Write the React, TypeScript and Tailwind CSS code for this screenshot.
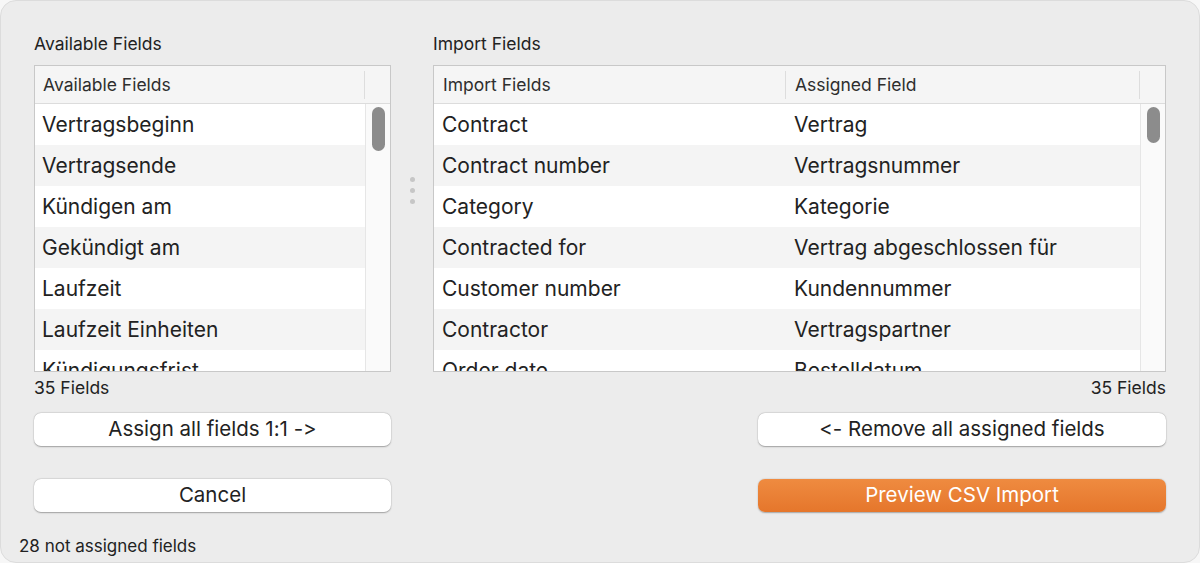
import React from 'react';

const available = [
  'Vertragsbeginn',
  'Vertragsende',
  'Kündigen am',
  'Gekündigt am',
  'Laufzeit',
  'Laufzeit Einheiten',
  'Kündigungsfrist',
];

const mappings: [string, string][] = [
  ['Contract', 'Vertrag'],
  ['Contract number', 'Vertragsnummer'],
  ['Category', 'Kategorie'],
  ['Contracted for', 'Vertrag abgeschlossen für'],
  ['Customer number', 'Kundennummer'],
  ['Contractor', 'Vertragspartner'],
  ['Order date', 'Bestelldatum'],
];

const font = { fontFamily: 'Inter, "Liberation Sans", sans-serif' };

const ScrollTrack = ({ thumb }: { thumb: string }) => (
  <div className="w-[25px] shrink-0 bg-[#fafafa] border-l border-[#e6e6e6] pt-[3px] flex justify-center">
    <div className={`w-[13px] rounded-full bg-[#8c8c8c] ${thumb}`} />
  </div>
);

const Button = ({ children, primary }: { children: React.ReactNode; primary?: boolean }) => (
  <button
    className={
      primary
        ? 'h-[33px] w-full rounded-[7px] bg-gradient-to-b from-[#ef8b40] to-[#e5762b] text-white text-[20.5px] shadow-[0_0.5px_1.5px_rgba(0,0,0,0.3)]'
        : 'h-[33px] w-full rounded-[7px] bg-white text-[#222] text-[20.5px] shadow-[0_0.5px_1.5px_rgba(0,0,0,0.3),0_0_0_0.5px_rgba(0,0,0,0.06)]'
    }
  >
    {children}
  </button>
);

const App: React.FC = () => {
  return (
    <div
      className="w-[1200px] h-[563px] bg-[#f7f7f7] overflow-hidden [font-feature-settings:'calt'_0] [font-variant-ligatures:none]"
      style={font}
    >
      <div className="w-full h-full rounded-[16px] bg-[#ececec] border border-[#dcdcdc] text-[#222] flex flex-col">
        <div className="flex pt-[32px] pl-[33px] pr-[33px]">
          {/* left: available fields */}
          <div className="w-[357px] flex flex-col">
            <div className="h-[22px] leading-[22px] text-[17.5px] mb-[10px]">Available Fields</div>
            <div className="h-[307px] border border-[#c8c8c8] bg-white flex flex-col overflow-hidden">
              <div className="h-[38px] shrink-0 flex items-center bg-[#f5f5f5] border-b border-[#dcdcdc]">
                <div className="flex-1 pl-[8px] text-[17.5px] text-[#2e2e2e] border-r border-[#dddddd] h-[28px] leading-[28px]">
                  Available Fields
                </div>
                <div className="w-[25px]" />
              </div>
              <div className="flex flex-1 min-h-0">
                <div className="flex-1 overflow-hidden">
                  {available.map((name, i) => (
                    <div
                      key={name}
                      className={`h-[41px] leading-[41px] pl-[7px] text-[21px] ${i % 2 ? 'bg-[#f4f4f4]' : 'bg-white'}`}
                    >
                      {name}
                    </div>
                  ))}
                </div>
                <ScrollTrack thumb="h-[44px]" />
              </div>
            </div>
            <div className="mt-[6px] h-[20px] leading-[20px] text-[17.5px]">35 Fields</div>
            <div className="mt-[15px]">
              <Button>Assign all fields 1:1 -&gt;</Button>
            </div>
            <div className="mt-[33px]">
              <Button>Cancel</Button>
            </div>
          </div>

          {/* splitter */}
          <div className="w-[42px] flex flex-col items-center pt-[144px] gap-[6px]">
            <div className="w-[5px] h-[5px] rounded-full bg-[#c6c6c6]" />
            <div className="w-[5px] h-[5px] rounded-full bg-[#c6c6c6]" />
            <div className="w-[5px] h-[5px] rounded-full bg-[#c6c6c6]" />
          </div>

          {/* right: import fields */}
          <div className="flex-1 flex flex-col">
            <div className="h-[22px] leading-[22px] text-[17.5px] mb-[10px]">Import Fields</div>
            <div className="h-[307px] border border-[#c8c8c8] bg-white flex flex-col overflow-hidden">
              <div className="h-[38px] shrink-0 flex items-center bg-[#f5f5f5] border-b border-[#dcdcdc]">
                <div className="w-[352px] pl-[9px] text-[17.5px] text-[#2e2e2e] border-r border-[#dddddd] h-[28px] leading-[28px]">
                  Import Fields
                </div>
                <div className="flex-1 pl-[9px] text-[17.5px] text-[#2e2e2e] border-r border-[#dddddd] h-[28px] leading-[28px]">
                  Assigned Field
                </div>
                <div className="w-[25px]" />
              </div>
              <div className="flex flex-1 min-h-0">
                <div className="flex-1 overflow-hidden">
                  {mappings.map(([src, dst], i) => (
                    <div
                      key={src}
                      className={`h-[41px] leading-[41px] flex text-[21px] ${i % 2 ? 'bg-[#f4f4f4]' : 'bg-white'}`}
                    >
                      <div className="w-[352px] pl-[8px]">{src}</div>
                      <div className="flex-1 pl-[8px]">{dst}</div>
                    </div>
                  ))}
                </div>
                <ScrollTrack thumb="h-[36px]" />
              </div>
            </div>
            <div className="mt-[6px] h-[20px] leading-[20px] text-[17.5px] text-right">35 Fields</div>
            <div className="mt-[15px] pl-[325px]">
              <Button>&lt;- Remove all assigned fields</Button>
            </div>
            <div className="mt-[33px] pl-[325px]">
              <Button primary>Preview CSV Import</Button>
            </div>
          </div>
        </div>
        <div className="mt-[24px] pl-[18px] h-[20px] leading-[20px] text-[17px]">28 not assigned fields</div>
      </div>
    </div>
  );
};

export default App;
